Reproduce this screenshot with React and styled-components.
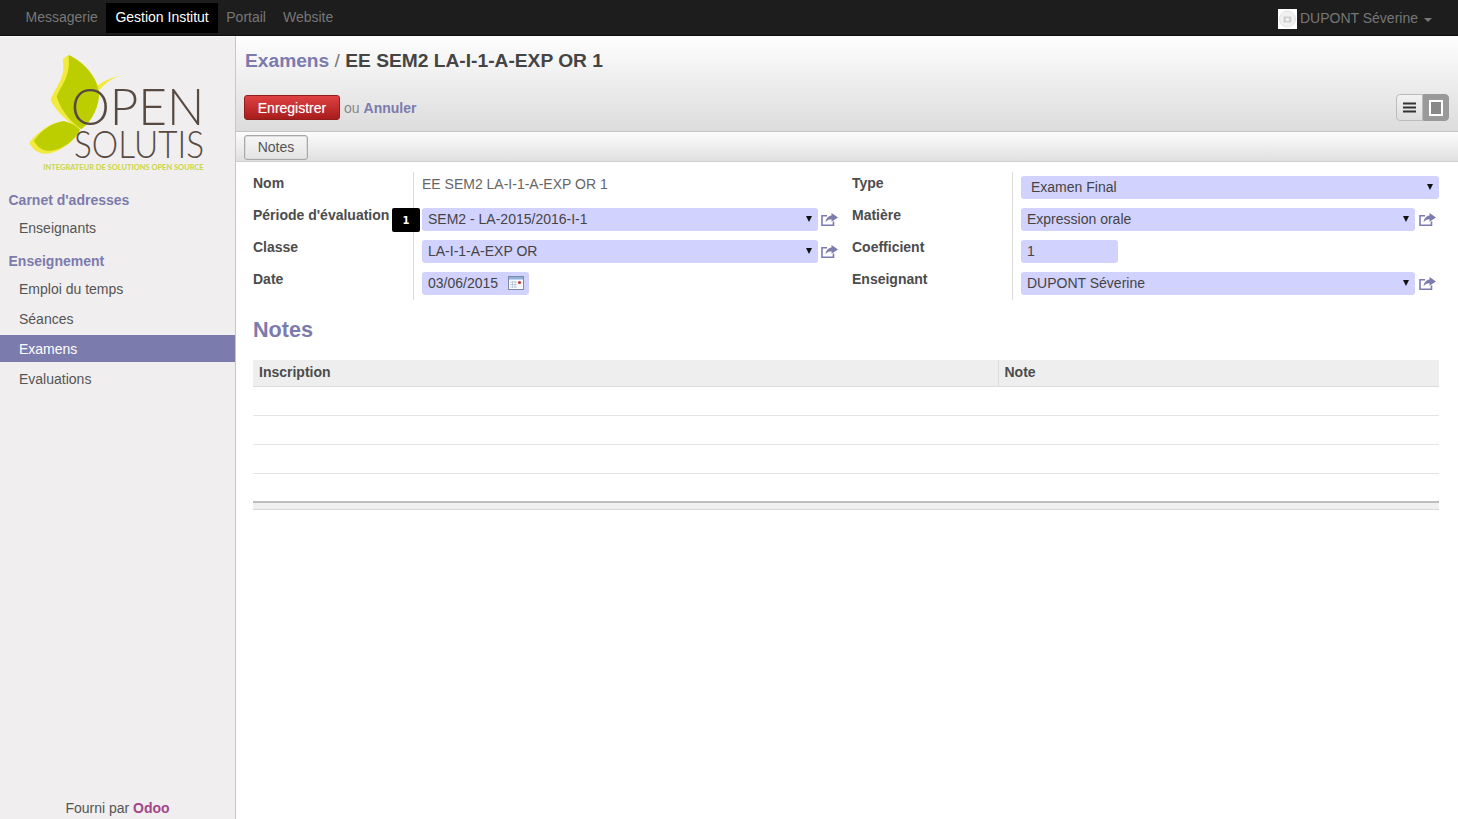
import React from "react";
import styled, { createGlobalStyle } from "styled-components";

const purple = "#7c7bad";

const GlobalStyle = createGlobalStyle`
  html, body {
    margin: 0;
    height: 100%;
    overflow: hidden;
    background: #fff;
    font-family: "Liberation Sans", Arial, sans-serif;
    font-size: 14px;
    color: #4c4c4c;
  }
  * { box-sizing: border-box; }
`;

const Page = styled.div`
  width: 1458px;
  height: 819px;
  display: flex;
  flex-direction: column;
  overflow: hidden;
`;

const TopBar = styled.header`
  height: 36px;
  flex: none;
  display: flex;
  align-items: flex-start;
  justify-content: space-between;
  padding: 3px 26px 0 17px;
  background: #1d1d1d;
  border-bottom: 1px solid #0c0c0c;
`;

const Nav = styled.nav`
  display: flex;
`;

const NavItem = styled.a`
  height: 30px;
  line-height: 29px;
  padding: 0 ${(p) => (p.$active ? 9 : 8.5)}px;
  color: ${(p) => (p.$active ? "#fff" : "#777")};
  background: ${(p) => (p.$active ? "#000" : "transparent")};
`;

const UserMenu = styled.div`
  display: flex;
  align-items: center;
  height: 29px;
  color: #777;
`;

const Avatar = styled.span`
  width: 19px;
  height: 20px;
  margin: 3px 3px 0 0;
  background: #fff;
  display: flex;
  align-items: center;
  justify-content: center;
`;

const Caret = styled.span`
  margin: 5px 0 0 6px;
  border-left: 4px solid transparent;
  border-right: 4px solid transparent;
  border-top: 4px solid #777;
`;

const Body = styled.div`
  flex: 1;
  display: flex;
  min-height: 0;
`;

const Sidebar = styled.aside`
  width: 236px;
  flex: none;
  display: flex;
  flex-direction: column;
  background: #f0eeee;
  border-right: 1px solid #c6c6c6;
  border-top: 1px solid #fafafa;
`;

const LogoBox = styled.div`
  height: 152px;
  padding: 8px 0 0 10px;
`;

const MenuHeading = styled.div`
  height: 22px;
  line-height: 22px;
  padding-left: 8.5px;
  margin: ${(p) => p.$gap || 0}px 0 2px;
  font-weight: bold;
  color: ${purple};
`;

const MenuItem = styled.a`
  display: block;
  height: 30px;
  line-height: 30px;
  padding-left: 19px;
  color: #555;
`;

const ActiveItem = styled(MenuItem)`
  height: 27px;
  line-height: 28px;
  margin: 1px 0 2px;
  color: #fff;
  background: ${purple};
`;

const Footer = styled.div`
  margin-top: auto;
  height: 21px;
  line-height: 21px;
  text-align: center;
  color: #555;
  b {
    color: #a24689;
  }
`;

const Main = styled.main`
  flex: 1;
  min-width: 0;
  display: flex;
  flex-direction: column;
`;

const Header = styled.div`
  height: 96px;
  flex: none;
  padding: 12px 9px 0 8px;
  background: linear-gradient(#fefefe, #dcdcdc);
  border-bottom: 1px solid #c4c4c4;
`;

const Title = styled.h1`
  margin: 0;
  height: 25px;
  padding-left: 1px;
  line-height: 25px;
  font-size: 19.2px;
  font-weight: bold;
  color: #444;
  a {
    color: ${purple};
  }
  span {
    color: #777;
    font-weight: normal;
  }
`;

const Actions = styled.div`
  display: flex;
  align-items: center;
  justify-content: space-between;
  margin-top: 21px;
  height: 27px;
`;

const ActionLeft = styled.div`
  display: flex;
  align-items: center;
  gap: 4px;
  color: #888;
  b {
    color: ${purple};
  }
`;

const SaveButton = styled.button`
  width: 96px;
  height: 25px;
  padding: 0;
  font: inherit;
  color: #fff;
  text-shadow: 0 0 1px rgba(255, 255, 255, 0.5);
  background: linear-gradient(#df4141, #a81c1c);
  border: 1px solid #8d1e1e;
  border-radius: 3px;
`;

const Switch = styled.div`
  display: flex;
  width: 53px;
  height: 27px;
`;

const SwitchButton = styled.div`
  flex: 1;
  display: flex;
  align-items: center;
  justify-content: center;
  background: ${(p) => (p.$active ? "#999" : "linear-gradient(#f2f2f2, #dedede)")};
  border: 1px solid ${(p) => (p.$active ? "#999" : "#bbb")};
  border-radius: ${(p) => (p.$active ? "0 4px 4px 0" : "4px 0 0 4px")};
`;

const TabBar = styled.div`
  height: 30px;
  flex: none;
  padding: 3px 8px 0;
  background: linear-gradient(#fcfcfc, #e0e0e0);
  border-bottom: 1px solid #cfcfcf;
`;

const TabButton = styled.button`
  width: 64px;
  height: 25px;
  padding: 0 0 2px;
  font: inherit;
  color: #555;
  background: linear-gradient(#f6f6f6, #e4e4e4);
  border: 1px solid #a8a8a8;
  border-radius: 3px;
  box-shadow: inset 0 0 0 1px #ddd;
`;

const Sheet = styled.div`
  position: relative;
  padding: 10px 19px 0 17px;
`;

const FormGrid = styled.div`
  display: flex;
`;

const Group = styled.div`
  width: ${(p) => p.$w}px;
  flex: none;
`;

const Row = styled.div`
  display: grid;
  grid-template-columns: 160px 1fr;
  height: 32px;
`;

const Label = styled.label`
  padding-top: 3px;
  line-height: 16px;
  font-weight: bold;
  color: #4c4c4c;
`;

const Cell = styled.div`
  display: flex;
  align-items: center;
  padding-left: 8px;
  border-left: 1px solid #dcdcdc;
`;

const ReadOnly = styled.span`
  color: #666;
  margin-top: -8px;
`;

const Field = styled.div`
  position: relative;
  display: flex;
  align-items: center;
  width: ${(p) => (p.$w ? `${p.$w}px` : "auto")};
  flex: ${(p) => (p.$w ? "none" : "1")};
  height: 23px;
  margin-top: -1px;
  padding: 0 0 1px ${(p) => p.$pad || 6}px;
  background: #d2d2ff;
  border-radius: 3px;
  color: #444;
`;

const Arrow = styled.span`
  position: absolute;
  right: 6px;
  top: 8px;
  border-left: 3px solid transparent;
  border-right: 3px solid transparent;
  border-top: 6px solid #111;
`;

const ShareLink = styled.span`
  flex: none;
  width: ${(p) => p.$w || 17}px;
  margin: -2px ${(p) => p.$mr || 0}px 0 3px;
  display: flex;
  justify-content: center;
`;

const Badge = styled.span`
  position: absolute;
  left: 156px;
  top: 46px;
  width: 28px;
  height: 24px;
  text-align: center;
  font: bold 10px/25px "DejaVu Sans", sans-serif;
  color: #fff;
  background: #000;
  border-radius: 2px;
`;

const SectionTitle = styled.h2`
  margin: 17px 0 17px;
  height: 26px;
  line-height: 26px;
  font-size: 21.6px;
  font-weight: bold;
  color: ${purple};
`;

const Table = styled.table`
  width: 1186px;
  border-collapse: collapse;
  table-layout: fixed;
  border-bottom: 2px solid #bdbdbd;
`;

const HeadCell = styled.th`
  height: 26px;
  padding: 0 6px 1px;
  text-align: left;
  font-size: 14px;
  color: #4c4c4c;
  background: #eee;
  border-bottom: 1px solid #ddd;
  & + & {
    border-left: 1px solid #ddd;
  }
`;

const BodyCell = styled.td`
  height: 29px;
  padding: 0;
  border-bottom: ${(p) => (p.$last ? "0" : "1px solid #e4e4e4")};
`;

const TableFoot = styled.div`
  width: 1186px;
  height: 7px;
  background: #f0f0f0;
  border-bottom: 1px solid #d8d8d8;
`;

const Logo = () => (
  <svg width="210" height="135" viewBox="0 0 630 405" overflow="visible">
    <path d="M158 45 C165 36 172 30 180 32 C225 52 262 100 267 140 C268 180 250 225 214 252 C185 240 140 205 122 165 C130 135 170 100 158 45 Z" fill="#f2ea3c" />
    <path d="M175 30 C222 50 262 100 267 140 C268 180 250 225 214 252 C195 240 155 205 140 155 C150 125 185 95 175 30 Z" fill="#bccd00" />
    <path d="M58 293 C85 258 125 232 160 229 C180 232 198 242 210 254 C195 288 150 322 110 326 C85 328 65 310 58 293 Z" fill="#f2ea3c" />
    <path d="M72 287 C95 255 130 232 160 229 C180 232 198 242 210 254 C195 288 150 318 115 317 C95 317 80 303 72 287 Z" fill="#bccd00" />
    <path d="M262 122 C285 105 305 98 330 92 C302 102 285 115 268 135 Z" fill="#f2ea3c" />
    <text x="182" y="241" fontFamily="Lato, sans-serif" fontWeight="300" fontSize="153" textLength="401" lengthAdjust="spacingAndGlyphs" fill="#574a42">OPEN</text>
    <text x="192" y="340" fontFamily="Lato, sans-serif" fontWeight="300" fontSize="114" textLength="390" lengthAdjust="spacingAndGlyphs" fill="#574a42">SOLUTIS</text>
    <text x="100" y="375" fontFamily="Lato, sans-serif" fontWeight="700" fontSize="24" textLength="481" lengthAdjust="spacingAndGlyphs" fill="#c9d64b">INTEGRATEUR DE SOLUTIONS OPEN SOURCE</text>
  </svg>
);

const CameraIcon = () => (
  <svg width="19" height="20" viewBox="0 0 19 20">
    <circle cx="9.5" cy="10" r="8" fill="#f1f1f1" stroke="#e2e2e2" />
    <rect x="5.5" y="7.5" width="8" height="6" fill="#cfcfcf" />
    <circle cx="9.5" cy="10.5" r="1.8" fill="#f1f1f1" />
  </svg>
);

const CalendarIcon = () => (
  <svg width="16" height="14" viewBox="0 0 16 14" style={{ position: "absolute", right: 5, top: 4 }}>
    <rect x="0.5" y="0.5" width="15" height="13" fill="#fbfbff" stroke="#7b8aa5" />
    <rect x="1" y="1" width="14" height="2.5" fill="#8fb0d8" />
    <path d="M2 6h7M2 8.5h7M2 11h7M4.5 5v7M7 5v7" stroke="#b9c4d6" strokeWidth="0.8" />
    <circle cx="11.5" cy="6.5" r="1.6" fill="#c23a3a" />
  </svg>
);

const ListIcon = () => (
  <svg width="13" height="11" viewBox="0 0 13 11">
    <path d="M0 1.5h13M0 5.5h13M0 9.5h13" stroke="#333" strokeWidth="2" />
  </svg>
);

const FormIcon = () => (
  <svg width="14" height="16" viewBox="0 0 14 16">
    <rect x="1" y="1" width="12" height="14" fill="#888" stroke="#fff" strokeWidth="2" />
  </svg>
);

// open box, filled arrow leaving through the top right corner
const ShareIcon = () => (
  <svg width="17" height="13" viewBox="0 0 17 13">
    <path d="M6 2.8H1V12.2H12.5V8.5" fill="none" stroke={purple} strokeWidth="1.6" />
    <path d="M10.5 0L17 4.4L10.5 8.8V6.2C7.8 6.2 6 7.2 4.6 9.4C4.8 5.8 7.2 3 10.5 2.6Z" fill={purple} />
  </svg>
);

const Share = ({ w, mr }) => (
  <ShareLink $w={w} $mr={mr}>
    <ShareIcon />
  </ShareLink>
);

const App = () => (
  <Page>
    <GlobalStyle />
    <TopBar>
      <Nav>
        <NavItem>Messagerie</NavItem>
        <NavItem $active>Gestion Institut</NavItem>
        <NavItem>Portail</NavItem>
        <NavItem>Website</NavItem>
      </Nav>
      <UserMenu>
        <Avatar>
          <CameraIcon />
        </Avatar>
        DUPONT Séverine
        <Caret />
      </UserMenu>
    </TopBar>
    <Body>
      <Sidebar>
        <LogoBox>
          <Logo />
        </LogoBox>
        <MenuHeading>Carnet d'adresses</MenuHeading>
        <MenuItem>Enseignants</MenuItem>
        <MenuHeading $gap={7}>Enseignement</MenuHeading>
        <MenuItem>Emploi du temps</MenuItem>
        <MenuItem>Séances</MenuItem>
        <ActiveItem>Examens</ActiveItem>
        <MenuItem>Evaluations</MenuItem>
        <Footer>
          Fourni par <b>Odoo</b>
        </Footer>
      </Sidebar>
      <Main>
        <Header>
          <Title>
            <a>Examens</a> <span>/</span> EE SEM2 LA-I-1-A-EXP OR 1
          </Title>
          <Actions>
            <ActionLeft>
              <SaveButton>Enregistrer</SaveButton>
              ou <b>Annuler</b>
            </ActionLeft>
            <Switch>
              <SwitchButton>
                <ListIcon />
              </SwitchButton>
              <SwitchButton $active>
                <FormIcon />
              </SwitchButton>
            </Switch>
          </Actions>
        </Header>
        <TabBar>
          <TabButton>Notes</TabButton>
        </TabBar>
        <Sheet>
          <FormGrid>
            <Group $w={599}>
              <Row>
                <Label>Nom</Label>
                <Cell>
                  <ReadOnly>EE SEM2 LA-I-1-A-EXP OR 1</ReadOnly>
                </Cell>
              </Row>
              <Row>
                <Label>Période d'évaluation</Label>
                <Cell>
                  <Field $w={396}>
                    SEM2 - LA-2015/2016-I-1
                    <Arrow />
                  </Field>
                  <Share />
                </Cell>
              </Row>
              <Row>
                <Label>Classe</Label>
                <Cell>
                  <Field $w={396}>
                    LA-I-1-A-EXP OR
                    <Arrow />
                  </Field>
                  <Share />
                </Cell>
              </Row>
              <Row>
                <Label>Date</Label>
                <Cell>
                  <Field $w={107}>
                    03/06/2015
                    <CalendarIcon />
                  </Field>
                </Cell>
              </Row>
            </Group>
            <Group $w={587}>
              <Row>
                <Label>Type</Label>
                <Cell>
                  <Field $pad={10}>
                    Examen Final
                    <Arrow />
                  </Field>
                </Cell>
              </Row>
              <Row>
                <Label>Matière</Label>
                <Cell>
                  <Field>
                    Expression orale
                    <Arrow />
                  </Field>
                  <Share w={19} mr={2} />
                </Cell>
              </Row>
              <Row>
                <Label>Coefficient</Label>
                <Cell>
                  <Field $w={97}>1</Field>
                </Cell>
              </Row>
              <Row>
                <Label>Enseignant</Label>
                <Cell>
                  <Field>
                    DUPONT Séverine
                    <Arrow />
                  </Field>
                  <Share w={19} mr={2} />
                </Cell>
              </Row>
            </Group>
          </FormGrid>
          <Badge>1</Badge>
          <SectionTitle>Notes</SectionTitle>
          <Table>
            <colgroup>
              <col width="745" />
              <col />
            </colgroup>
            <thead>
              <tr>
                <HeadCell>Inscription</HeadCell>
                <HeadCell>Note</HeadCell>
              </tr>
            </thead>
            <tbody>
              {[0, 1, 2, 3].map((i) => (
                <tr key={i}>
                  <BodyCell colSpan={2} $last={i === 3} />
                </tr>
              ))}
            </tbody>
          </Table>
          <TableFoot />
        </Sheet>
      </Main>
    </Body>
  </Page>
);

export default App;
